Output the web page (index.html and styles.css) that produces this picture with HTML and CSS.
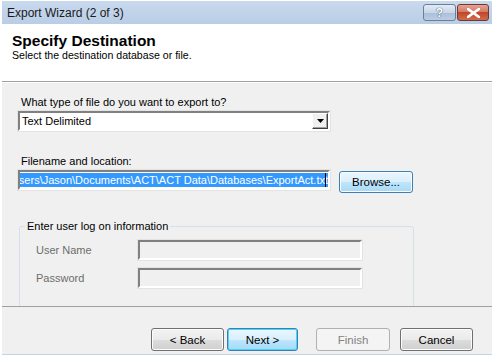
FILE: index.html
```html
<!DOCTYPE html>
<html lang="en">
<head>
    <meta charset="UTF-8">
    <title>Export Wizard (2 of 3)</title>
    <link rel="stylesheet" href="styles.css">
</head>
<body>
    <div class="window">
        <div class="titlebar">
            <span class="title">Export Wizard (2 of 3)</span>
            <div class="caption-btns">
                <div class="cap-btn help">?</div>
                <div class="cap-btn close">
                    <svg width="13" height="10" viewBox="0 0 13 10">
                        <path d="M1 1 L12 9 M12 1 L1 9" stroke="#fff" stroke-width="2.6" stroke-linecap="square"/>
                    </svg>
                </div>
            </div>
        </div>

        <div class="header">
            <h1>Specify Destination</h1>
            <p>Select the destination database or file.</p>
        </div>

        <div class="content">
            <label class="field-label">What type of file do you want to export to?</label>
            <div class="combo">
                <span class="combo-value">Text Delimited</span>
                <div class="combo-arrow">
                    <svg width="7" height="4" viewBox="0 0 7 4"><path d="M0 0 H7 L3.5 4 Z" fill="#000"/></svg>
                </div>
            </div>

            <label class="field-label second">Filename and location:</label>
            <div class="file-row">
                <div class="textbox">
                    <span class="selected">C:\Users\Jason\Documents\ACT\ACT Data\Databases\ExportAct.txt</span>
                    <span class="caret"></span>
                </div>
                <button class="btn browse">Browse...</button>
            </div>

            <fieldset class="group">
                <legend>Enter user log on information</legend>
                <div class="login-row">
                    <span class="login-label">User Name</span>
                    <div class="login-input"></div>
                </div>
                <div class="login-row">
                    <span class="login-label">Password</span>
                    <div class="login-input"></div>
                </div>
            </fieldset>
        </div>

        <div class="footer">
            <button class="btn back">&lt; Back</button>
            <button class="btn default next">Next &gt;</button>
            <button class="btn disabled finish">Finish</button>
            <button class="btn cancel">Cancel</button>
        </div>
    </div>
</body>
</html>
```

FILE: styles.css
```css
body {
    margin: 0;
    background: #ffffff;
    font-family: "Liberation Sans", Arial, sans-serif;
    font-size: 11px;
    color: #000;
}

.window {
    margin: 1px 0 0 2px;
    width: 490px;
}

/* Title bar */
.titlebar {
    height: 23px;
    background: linear-gradient(#c9daee, #b9cde6);
    display: flex;
    align-items: center;
    justify-content: space-between;
}

.title {
    padding-left: 5px;
    font-size: 12px;
    color: #1a1a1a;
}

.caption-btns {
    display: flex;
    gap: 1px;
    padding-right: 3px;
    align-self: flex-start;
    padding-top: 3px;
}

.cap-btn {
    width: 30px;
    height: 15px;
    border: 1px solid #6d7f96;
    border-radius: 3px;
    display: flex;
    align-items: center;
    justify-content: center;
    font-weight: bold;
    font-size: 12px;
}

.help {
    width: 31px;
    background: linear-gradient(#e3ebf5 0%, #c8d6e8 50%, #a9bed8 51%, #bccde3 100%);
    color: #fff;
    text-shadow: 0 0 1px #3d5573, 0 0 1px #3d5573;
}

.close {
    border-color: #6b3a33;
    background: linear-gradient(#e8a293 0%, #d57a66 45%, #c0472c 50%, #d16c4d 100%);
}

/* Header */
.header {
    height: 58px;
    background: #fff;
    padding-left: 10px;
    border-bottom: 1px solid #a0a0a0;
    box-sizing: border-box;
}

.header h1 {
    margin: 0;
    padding-top: 8px;
    font-size: 15.5px;
    font-weight: bold;
    line-height: 17px;
}

.header p {
    margin: 0;
    font-size: 10.6px;
    line-height: 13px;
}

/* Body */
.content {
    height: 225px;
    background: #f0f0f0;
    border-top: 1px solid #fff;
    border-bottom: 1px solid #a0a0a0;
    box-sizing: border-box;
    overflow: hidden;
    padding: 12px 0 0 16px;
}

.field-label {
    display: block;
    padding-left: 3px;
    line-height: 14px;
}

.field-label.second {
    margin-top: 23px;
}

.combo {
    margin-top: 2px;
    width: 312px;
    height: 20px;
    box-sizing: border-box;
    background: #fff;
    border: 2px solid;
    border-color: #808080 #fff #fff #808080;
    box-shadow: 0 0 0 1px #e3e3e3;
    display: flex;
    align-items: center;
    justify-content: space-between;
}

.combo-value {
    padding-left: 2px;
}

.combo-arrow {
    width: 16px;
    height: 16px;
    box-sizing: border-box;
    background: #f0f0f0;
    border: 1px solid;
    border-color: #fff #404040 #404040 #fff;
    box-shadow: inset -1px -1px 0 #a0a0a0;
    display: flex;
    align-items: center;
    justify-content: center;
}

.file-row {
    margin-top: 2px;
    display: flex;
    align-items: flex-start;
    gap: 9px;
}

.textbox {
    width: 312px;
    height: 20px;
    box-sizing: border-box;
    background: #fff;
    border: 2px solid;
    border-color: #808080 #fff #fff #808080;
    box-shadow: 0 0 0 1px #e3e3e3;
    display: flex;
    justify-content: flex-end;
    align-items: center;
    overflow: hidden;
    white-space: nowrap;
    padding-right: 2px;
}

.selected {
    background: #3399ff;
    color: #fff;
    line-height: 14px;
    flex-shrink: 0;
    margin-right: -3px;
}

.caret {
    flex-shrink: 0;
    width: 1px;
    height: 14px;
    background: #000;
}

/* Buttons */
.btn {
    font-family: "Liberation Sans", Arial, sans-serif;
    font-size: 11.5px;
    color: #000;
    width: 73px;
    height: 23px;
    border: 1px solid #707070;
    border-radius: 3px;
    background: linear-gradient(#f2f2f2 0%, #ebebeb 50%, #dddddd 51%, #cfcfcf 100%);
    box-shadow: inset 0 0 0 1px #fcfcfc;
    padding: 0;
}

.btn.default {
    border-color: #3c7fb1;
    box-shadow: inset 0 0 0 1px #48d4fd;
    background: linear-gradient(#eaf6fd 0%, #d9f0fc 50%, #bee6fd 51%, #a7d9f5 100%);
}

.btn.browse {
    margin-top: 1px;
    width: 74px;
    height: 22px;
    border-color: #3c7fb1;
    background: linear-gradient(#eaf6fd 0%, #d9f0fc 50%, #bee6fd 51%, #a7d9f5 100%);
}

.btn.disabled {
    border-color: #adb2b5;
    background: #f4f4f4;
    box-shadow: none;
    color: #838383;
}

/* Group box */
.group {
    margin: 26px 0 0 1px;
    width: 395px;
    height: 140px;
    box-sizing: border-box;
    border: 1px solid #d5dfe5;
    border-radius: 3px;
    padding: 7px 0 0 0;
}

.group legend {
    padding: 0 2px;
    margin-left: 5px;
    line-height: 14px;
}

.login-row {
    display: flex;
    align-items: center;
    height: 20px;
    margin-bottom: 8px;
}

.login-label {
    width: 102px;
    padding-left: 16px;
    color: #6d6d6d;
}

.login-input {
    width: 224px;
    height: 20px;
    box-sizing: border-box;
    background: #f0f0f0;
    border: 2px solid;
    border-color: #808080 #fff #fff #808080;
    box-shadow: 0 0 0 1px #e3e3e3;
}

/* Footer */
.footer {
    height: 48px;
    background: #f0f0f0;
    border-bottom: 1px solid #c3d4e6;
    box-sizing: border-box;
    display: flex;
    align-items: flex-start;
    padding: 21px 0 0 149px;
}

.footer .next {
    width: 71px;
    margin-left: 3px;
}

.footer .finish {
    width: 74px;
    margin-left: 18px;
}

.footer .cancel {
    margin-left: 10px;
}
```
